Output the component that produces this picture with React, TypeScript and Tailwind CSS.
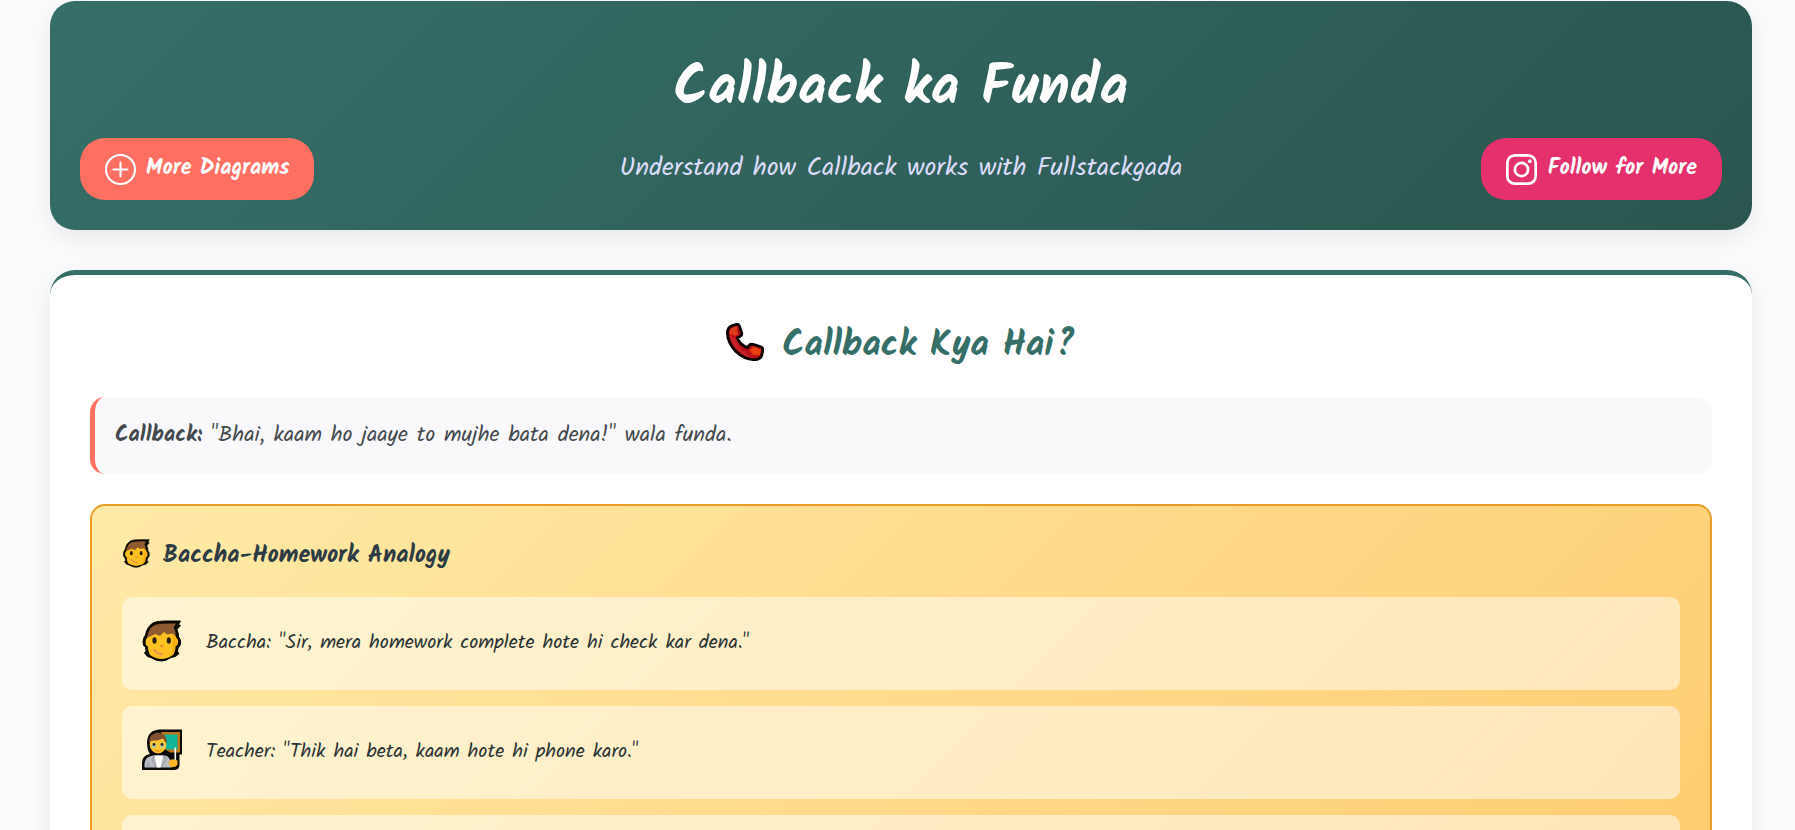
import type { ReactNode } from "react";

function PhoneIcon({ className }: { className: string }) {
  return (
    <svg viewBox="0 0 40 40" className={className} aria-hidden="true">
      <path
        d="M6 3 L11 1.5 Q13 1 14 3 L16.5 10.5 Q17 13 15 14 L12 15.5 Q12.5 18.5 16 22 Q19.500 25 22.500 26 L24.500 23.500 Q26 22 28.500 22.500 L36.500 25 Q39 26 38.700 28.500 L37.800 33.500 Q36.500 38 31 38.500 Q20 39 10.500 30 Q1.500 20.500 1.500 10 Q2 4.500 6 3 Z"
        fill="#b80f18"
        stroke="#0a0000"
        strokeWidth="3"
        strokeLinejoin="round"
      />
      <path d="M6.500 5 L11.500 3.200 L14.500 12 L9 13.500 L3.500 11 Q4 6 6.500 5 Z" fill="#e03a1c" />
      <path d="M11.500 3.200 L12.800 3.600 L15 11.500 L12.500 13 Z" fill="#a80f16" />
      <path d="M28.500 24.800 L36.800 27.500 L35.500 34 L28 33.500 L25 29 Z" fill="#e8400f" />
      <path d="M3.200 12.500 Q6 24 15 31 Q21 36 29 36.500 Q16 31 9 16 Z" fill="#c9202a" />
    </svg>
  );
}

function BoyIcon({ className }: { className: string }) {
  return (
    <svg viewBox="0 0 40 42" className={className} aria-hidden="true">
      <path
        d="M3.500 15 Q5 6 12 2.500 Q16 1 23 1 L38.500 1 L36.500 4.500 L38.500 5.500 L35 9.500 Q36.500 13 36.600 17 Q39 19 38.500 24 Q38 26.500 36 28 L35.500 31.500 L37 33.500 L33.500 36.500 L29 37.500 Q24 41 19.500 41 Q14 41 10 38 L5.500 36.500 L2.500 33 L4.200 31 L3.500 27.500 Q1 26 1 22 Q1 18 3.500 15 Z"
        fill="#0b0700"
        stroke="#0b0700"
        strokeLinejoin="round"
      />
      <path
        d="M5 18 L8 11 L31 11 L34.500 18 Q36.500 19 36 23 Q35.500 26 33.500 26.500 Q33.500 32 31 35 Q25 39 19.500 39 Q14 39 8 35 Q6 32 5.800 26.500 Q3.500 25.500 3.500 22.500 Q3.500 19 5 18 Z"
        fill="#ffc021"
      />
      <path d="M30 13 L33 17 Q35.500 19 35.500 23 Q34.500 26 33 26.500 Q33 33 28 36.500 Q31 29 31 20 Z" fill="#f9ad0e" />
      <path
        d="M5 18 Q6 7.500 14 4.500 Q20 3 34 3.500 L31.500 7.500 Q34 11 33.500 16 L30.500 13.500 L25 14.500 L22 12 L18 16 L13 14 L9 16 Z"
        fill="#8f5a30"
      />
      <ellipse cx="12.500" cy="20.500" rx="2.100" ry="3.200" fill="#2b1c10" />
      <ellipse cx="26.800" cy="20.500" rx="2.100" ry="3.200" fill="#2b1c10" />
      <path d="M17.500 25 H22 L20 28 Z" fill="#f58b3c" />
      <path d="M12.500 30 Q15 34 20 34.500" fill="none" stroke="#ef9350" strokeWidth="2.200" strokeLinecap="round" />
    </svg>
  );
}

function TeacherIcon({ className }: { className: string }) {
  return (
    <svg viewBox="0 0 40 41" className={className} aria-hidden="true">
      <path
        d="M17 0 H40 V25 H37.500 V35 Q37.500 40.500 32 40.500 H0 V33 Q0 26 8 24.500 Q5 21 5 13 Q5.500 1 17 0 Z"
        fill="#090909"
      />
      <path d="M19 2.500 H38 V23 H28 L22 19 Z" fill="#b97717" />
      <path d="M22 5 H35.500 V20 H24 Z" fill="#12b59a" />
      <ellipse cx="16" cy="15" rx="8.300" ry="9" fill="#ffc52e" />
      <path d="M7 14 Q6.500 4 16 3 Q25 4 25 14 Q23 13 21 9 Q13 12 10 11 Q8 12 7 14 Z" fill="#805030" />
      <circle cx="12" cy="16" r="2.500" fill="#b5cf9c" />
      <circle cx="20" cy="16" r="2.500" fill="#b5cf9c" />
      <circle cx="12" cy="15" r="1.400" fill="#2e241b" />
      <circle cx="20" cy="15" r="1.400" fill="#2e241b" />
      <path d="M13 20.500 Q16 22.500 19 20.500" fill="none" stroke="#e08a2b" strokeWidth="1.300" />
      <path d="M2.500 38 V34 Q3 27 11 26 H23 Q29 27 30 38 Z" fill="#b9bcc2" />
      <path d="M12.500 26 H21 L18.500 38 H15 Z" fill="#ffffff" />
      <path d="M12 26 L10 30 L14.500 38 M21.500 26 L24 30 L19 38 M6 33 V38" fill="none" stroke="#8c9097" />
      <path d="M33.300 18 V33" stroke="#ffffff" strokeWidth="1.600" />
      <path d="M27 32 Q29 29 32 30 L35.500 31 V35 Q34 38 29 37.500 Q26 36 27 32 Z" fill="#ffb52a" />
    </svg>
  );
}

function PlusCircleIcon() {
  return (
    <svg viewBox="0 0 32 32" className="size-8 shrink-0" fill="none" stroke="currentColor" strokeWidth="2.100" strokeLinecap="round" aria-hidden="true">
      <circle cx="16.500" cy="16.500" r="14.500" />
      <path d="M16.500 9.500 V23.500 M9.500 16.500 H23.500" />
    </svg>
  );
}

function InstagramIcon() {
  return (
    <svg viewBox="0 0 32 32" className="size-8 shrink-0" fill="none" stroke="currentColor" strokeWidth="2.700" aria-hidden="true">
      <rect x="1.350" y="2.350" width="28.300" height="28.300" rx="7.500" />
      <circle cx="15.500" cy="16.500" r="6.600" />
      <circle cx="23.800" cy="8.200" r="1.900" fill="currentColor" stroke="none" />
    </svg>
  );
}

function DialogueRow({ icon, children }: { icon?: ReactNode; children?: ReactNode }) {
  return (
    <li className="flex h-[93px] items-start gap-6 rounded-[10px] bg-white/50 px-5 pt-[23px] text-xl text-[#2d3436]">
      {icon}
      {children && <p className="leading-[46px]">{children}</p>}
    </li>
  );
}

export default function App() {
  return (
    <main className="h-screen overflow-hidden bg-[#fafbfd] pt-px pr-[43px] pl-[50px] font-[Kalam,Lato,cursive]">
      <header className="rounded-[25px] bg-linear-135 from-[#356f68] to-[#2a564f] px-[30px] pt-12 pb-[30px] shadow-[0_8px_25px_rgba(0,0,0,0.08)]">
        <h1 className="pb-2 text-center text-[56px] leading-[81px] font-bold text-white">
          Callback ka Funda
        </h1>
        <div className="grid grid-cols-[1fr_auto_1fr] items-center">
          <a href="#diagrams" className="flex h-[62px] items-center gap-2.5 justify-self-start rounded-[25px] bg-[#ff7062] px-6 text-[22px] leading-8 font-bold text-white">
            <PlusCircleIcon />
            More Diagrams
          </a>
          <p className="pb-0.5 text-[26px] leading-9 text-[#dcdcfa]">
            Understand how Callback works with Fullstackgada
          </p>
          <a href="#follow" className="flex h-[62px] items-center gap-2.5 justify-self-end rounded-[25px] bg-[#e4306c] px-[25px] text-[22px] leading-8 font-bold text-white">
            <InstagramIcon />
            Follow for More
          </a>
        </div>
      </header>

      <section className="mt-10 rounded-[25px] border-t-[5px] border-[#356f68] bg-white px-10 pt-10 pb-10 shadow-[0_8px_25px_rgba(0,0,0,0.08)]">
        <h2 className="flex items-start justify-center gap-[18px] text-4xl leading-[62px] font-bold text-[#356f68]">
          <PhoneIcon className="mt-2 size-[38px]" />
          Callback Kya Hai?
        </h2>
        <p className="mt-5 rounded-[15px] border-l-[5px] border-[#ff7062] bg-[#f9f9fb] px-5 pt-[23px] pb-[22px] text-[22px] leading-8 text-[#444a4d]">
          <strong>Callback:</strong> "Bhai, kaam ho jaaye to mujhe bata dena!" wala funda.
        </p>

        <section className="mt-[30px] rounded-[15px] border-2 border-[#e99d28] bg-linear-135 from-[#ffeaa7] to-[#fdcb6e] px-[30px] pt-[30px] pb-[30px]">
          <h3 className="flex items-start gap-3 text-2xl leading-10 font-bold text-[#2d3b45]">
            <BoyIcon className="mt-[3px] size-[29px]" />
            Baccha-Homework Analogy
          </h3>
          <ul className="mt-[21px] flex flex-col gap-4">
            <DialogueRow icon={<BoyIcon className="h-[42px] w-10" />}>
              Baccha: "Sir, mera homework complete hote hi check kar dena."
            </DialogueRow>
            <DialogueRow icon={<TeacherIcon className="h-[42px] w-10" />}>
              Teacher: "Thik hai beta, kaam hote hi phone karo."
            </DialogueRow>
            <DialogueRow />
          </ul>
        </section>
      </section>
    </main>
  );
}
